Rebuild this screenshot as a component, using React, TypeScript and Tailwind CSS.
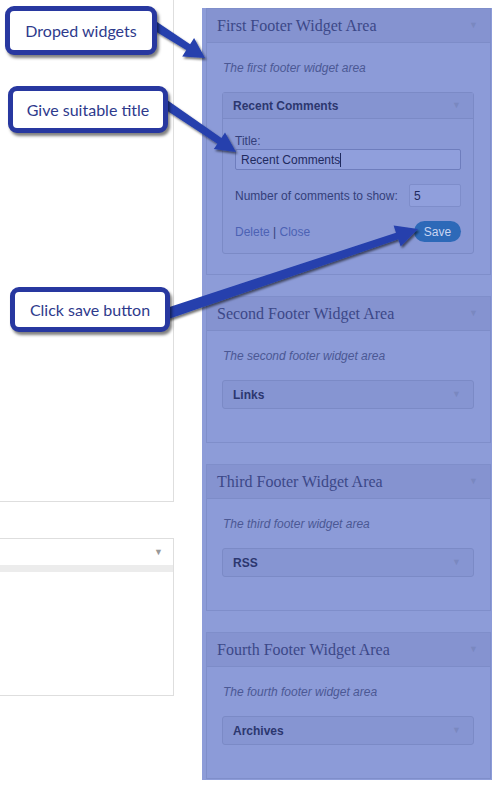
import React from "react";

type Pt = [number, number];

// tapered arrow drawn as one polygon: shaft + head
function arrowPoints(from: Pt, to: Pt, w0: number, w1: number, headLen: number, headHalf: number) {
  const dx = to[0] - from[0];
  const dy = to[1] - from[1];
  const len = Math.hypot(dx, dy);
  const ux = dx / len;
  const uy = dy / len;
  const px = -uy;
  const py = ux;
  const bx = to[0] - ux * headLen;
  const by = to[1] - uy * headLen;
  const pts: Pt[] = [
    [from[0] + px * w0, from[1] + py * w0],
    [bx + px * w1, by + py * w1],
    [bx + px * headHalf, by + py * headHalf],
    to,
    [bx - px * headHalf, by - py * headHalf],
    [bx - px * w1, by - py * w1],
    [from[0] - px * w0, from[1] - py * w0],
  ];
  return pts.map((p) => `${p[0].toFixed(1)},${p[1].toFixed(1)}`).join(" ");
}

const Callout: React.FC<{ className: string; children: React.ReactNode }> = ({ className, children }) => (
  <div
    className={`absolute flex items-center justify-center bg-white border-[5px] border-[#2838a0] rounded-[9px] shadow-[2px_3px_3px_rgba(0,0,0,0.5)] text-[#2e3a8c] text-[16px] font-['Lato','Liberation_Sans',sans-serif] ${className}`}
  >
    {children}
  </div>
);

const Caret = () => <span className="text-[9px] text-[#7a88c0] leading-none">▼</span>;

const Area: React.FC<{ title: string; desc: string; pb: string; children: React.ReactNode }> = ({
  title,
  desc,
  pb,
  children,
}) => (
  <div className="border border-[#7f8eca] bg-[#8c9bd8]">
    <div className="h-[34px] flex items-center justify-between pl-[10px] pr-[12px] bg-[#8593d0] border-b border-[#7d8cc8]">
      <span className="font-['Liberation_Serif','DejaVu_Serif',serif] text-[16px] text-[#3c4888]">{title}</span>
      <Caret />
    </div>
    <div className={`pt-[17px] pl-[15px] pr-[16px] ${pb}`}>
      <p className="pl-[1px] text-[12px] leading-[16px] italic text-[#4b5894]">{desc}</p>
      <div className="mt-[16px]">{children}</div>
    </div>
  </div>
);

const Widget: React.FC<{ name: string }> = ({ name }) => (
  <div className="h-[29px] flex items-center justify-between pl-[10px] pr-[12px] bg-[#8695d2] border border-[#7b8ac6] rounded-[3px]">
    <span className="text-[12px] font-bold text-[#2c376f]">{name}</span>
    <Caret />
  </div>
);

export default function App() {
  return (
    <div className="relative w-[496px] h-[792px] bg-white overflow-hidden flex items-start font-['Liberation_Sans',Arial,sans-serif]">
      {/* left column: the WordPress available widgets boxes */}
      <div className="w-[174px] flex flex-col shrink-0">
        <div className="h-[502px] border-r border-b border-[#dedede]" />
        <div className="mt-[36px] h-[158px] border-t border-r border-b border-[#dedede] flex flex-col">
          <div className="h-[26px] flex items-center justify-end pr-[10px]">
            <span className="text-[9px] text-[#999] leading-none">▼</span>
          </div>
          <div className="h-[7px] bg-[#ececec]" />
        </div>
      </div>

      {/* sidebar overlay */}
      <div className="ml-[28px] mt-[8px] w-[290px] h-[772px] bg-[#8d9cd8] pl-[4px] pr-[1px] flex flex-col gap-[21px] shrink-0">
        <Area title="First Footer Widget Area" desc="The first footer widget area" pb="pb-[20px]">
          <div className="bg-[#8a99d6] border border-[#7b8ac6] rounded-[3px]">
            <div className="h-[26px] flex items-center justify-between pl-[10px] pr-[12px] bg-[#8594d1] border-b border-[#7b8ac6]">
              <span className="text-[12px] font-bold text-[#2c376f]">Recent Comments</span>
              <Caret />
            </div>
            <div className="pt-[14px] pb-[11px] pl-[12px] pr-[12px] text-[12px] text-[#34407a]">
              <div className="leading-[16px]">Title:</div>
              <div className="h-[21px] flex items-center pl-[5px] bg-[#909fdc] border border-[#6e7dbd] rounded-[2px] text-[#1f2a5e]">
                Recent Comments<span className="w-px h-[14px] bg-[#1f2a5e]" />
              </div>
              <div className="mt-[14px] h-[23px] flex items-center justify-between">
                <span>Number of comments to show:</span>
                <div className="w-[52px] h-[23px] flex items-center pl-[4px] bg-[#909fdc] border border-[#7e8dca] rounded-[2px] text-[#1f2a5e]">
                  5
                </div>
              </div>
              <div className="mt-[14px] h-[21px] flex items-center justify-between">
                <span>
                  <span className="text-[#4c62b4]">Delete</span> <span className="text-[#34407a]">|</span>{" "}
                  <span className="text-[#4c62b4]">Close</span>
                </span>
                <div className="w-[47px] h-[21px] rounded-full bg-[#2d69b8] flex items-center justify-center text-[12px] text-[#c9d5f2]">
                  Save
                </div>
              </div>
            </div>
          </div>
        </Area>
        <Area title="Second Footer Widget Area" desc="The second footer widget area" pb="pb-[33px]">
          <Widget name="Links" />
        </Area>
        <Area title="Third Footer Widget Area" desc="The third footer widget area" pb="pb-[33px]">
          <Widget name="RSS" />
        </Area>
        <Area title="Fourth Footer Widget Area" desc="The fourth footer widget area" pb="pb-[33px]">
          <Widget name="Archives" />
        </Area>
      </div>

      {/* arrows */}
      <svg className="absolute inset-0 pointer-events-none" width="496" height="792" viewBox="0 0 496 792">
        <defs>
          <filter id="sh" x="-20%" y="-20%" width="140%" height="140%">
            <feDropShadow dx="1.5" dy="2" stdDeviation="1.2" floodColor="#000" floodOpacity="0.55" />
          </filter>
        </defs>
        <g fill="#2540ad" filter="url(#sh)">
          <polygon points={arrowPoints([152, 24], [205, 58], 4.5, 3.5, 20, 11)} />
          <polygon points={arrowPoints([162, 102], [236, 152], 4.5, 3.5, 20, 10)} />
          <polygon points={arrowPoints([166, 314], [418, 229], 5.5, 3.5, 22, 11)} />
        </g>
      </svg>

      {/* callouts */}
      <Callout className="left-[5px] top-[6px] w-[152px] h-[49px]">Droped widgets</Callout>
      <Callout className="left-[8px] top-[86px] w-[160px] h-[47px]">Give suitable title</Callout>
      <Callout className="left-[10px] top-[287px] w-[160px] h-[45px]">Click save button</Callout>
    </div>
  );
}
